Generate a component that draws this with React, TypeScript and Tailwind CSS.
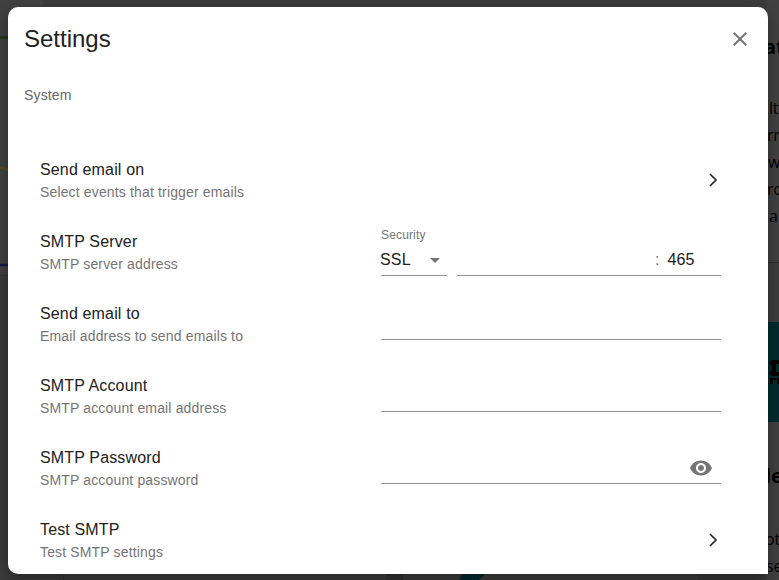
import type { ReactNode } from "react";

const Chevron = () => (
  <svg viewBox="0 0 24 24" className="mr-[-4px] h-6 w-6 fill-none stroke-[#212121] stroke-[1.6]" aria-hidden="true">
    <path d="m9 6 6 6-6 6" />
  </svg>
);

function Row({ title, hint, children }: { title: string; hint: string; children?: ReactNode }) {
  return (
    <div className="flex h-[72px] items-center">
      <div className="w-[341px] shrink-0">
        <div className="text-base leading-6 tracking-[0.15px]">{title}</div>
        <div className="text-sm leading-5 tracking-[0.15px] text-[#757575]">{hint}</div>
      </div>
      <div className="flex min-w-0 flex-1 justify-end">{children}</div>
    </div>
  );
}

function Field({ children }: { children?: ReactNode }) {
  return (
    <div className="flex h-8 w-full items-center justify-end border-b border-[#949494] pr-2">
      {children}
    </div>
  );
}

function Backdrop() {
  return (
    <div className="flex h-full bg-[#3b3b3b] text-black">
      <div className="h-full w-[43px] shrink-0">
        <div className="h-[276px] border-b border-[#333333] bg-[#404040]">
          <svg viewBox="0 0 43 276" className="h-[276px] w-[43px] fill-none stroke-[2.5]">
            <path d="M0 37.5H43" stroke="#20380d" />
            <path d="M0 167.5Q8 169 18 174" stroke="#5a4c14" />
            <path d="M0 265H43" stroke="#14184a" />
          </svg>
        </div>
      </div>
      <div className="flex h-full min-w-0 flex-1 flex-col">
        <div className="h-[574px]" />
        <div className="flex h-[6px]">
          <div className="w-[20px] bg-[#3b3b3b]" />
          <div className="w-[323px] border-l border-[#353535] bg-[#3d3d3d]" />
          <div className="w-[17px] bg-[#343434]" />
          <div className="w-[294px] bg-[#3d3d3d]">
            <svg viewBox="0 0 294 6" className="h-[6px] w-full">
              <path d="M59 0H82L76 6H56Z" fill="#002b30" />
            </svg>
          </div>
          <div className="flex-1 bg-[#393939]" />
        </div>
      </div>
      <div className="w-[13px] shrink-0 overflow-hidden bg-[#404040] pl-[2px] font-['Open_Sans',sans-serif] text-base leading-[27px] tracking-[-0.2px]">
        <div className="h-[263px] border-b border-[#292929] pt-[31px]">
          <div className="ml-[-4px] h-[64px] text-xl font-bold leading-8">at</div>
          <div className="ml-[1px]">lt</div>
          <div className="ml-[-1px]">rr</div>
          <div>w</div>
          <div className="ml-[-1px]">rc</div>
          <div className="ml-[1px]">a</div>
        </div>
        <div className="h-[59px] bg-[#3d3d3d]" />
        <div className="ml-[-2px] h-[100px] bg-[#002b30] pt-[38px]">
          <svg viewBox="0 0 13 24" className="h-6 w-[13px]">
            <path d="M4 2 6 0H13V4H10V12H13V16H6L4 14V11H6V5H4ZM4 18H10V20H7V24H4ZM11 18H13V24H11Z" fill="#000" />
          </svg>
        </div>
        <div className="ml-[-2px] pt-[38px]">
          <div className="ml-[-1px] h-[66px] text-xl font-bold leading-8">le</div>
          <div className="ml-[-1px]">ot</div>
          <div>se</div>
        </div>
      </div>
    </div>
  );
}

export default function App() {
  return (
    <div className="relative h-[580px] w-[779px] overflow-hidden bg-[#3b3b3b] font-['Liberation_Sans',Arial,sans-serif] text-[#212121]">
      <Backdrop />
      <main
        role="dialog"
        aria-label="Settings"
        className="absolute left-2 top-[7px] h-[567px] w-[760px] rounded-[10px] rounded-br-none bg-white px-4 pt-4 shadow-[0_6px_14px_rgba(0,0,0,0.35)]"
      >
        <header className="flex h-8 items-center justify-between">
          <h1 className="text-2xl leading-8">Settings</h1>
          <svg viewBox="0 0 24 24" className="h-6 w-6 fill-[#757575]" aria-label="Close">
            <path d="M19 6.41 17.59 5 12 10.59 6.41 5 5 6.41 10.59 12 5 17.59 6.41 19 12 13.41 17.59 19 19 17.59 13.41 12z" />
          </svg>
        </header>
        <h2 className="mt-[30px] text-sm leading-5 tracking-[0.15px] text-[#666666]">System</h2>
        <section className="mt-[39px] pl-4 pr-[31px]">
          <Row title="Send email on" hint="Select events that trigger emails">
            <Chevron />
          </Row>
          <Row title="SMTP Server" hint="SMTP server address">
            <div className="mb-[2px] flex w-full items-end gap-[10px]">
              <div className="w-[66px]">
                <div className="text-xs leading-4 tracking-[0.15px] text-[#757575]">Security</div>
                <div className="ml-[-1px] mr-0 flex h-[33px] items-center justify-between pl-0 pt-[2px] text-base tracking-[0.15px] shadow-[inset_1px_0_white,inset_0_-1px_#949494]">
                  SSL
                  <svg viewBox="0 0 24 24" className="h-6 w-6 fill-[#757575]" aria-hidden="true">
                    <path d="m7 10 5 5 5-5z" />
                  </svg>
                </div>
              </div>
              <div className="flex h-[33px] flex-1 items-center border-b border-[#949494] pl-[198px] pt-[2px] text-base tracking-[0.15px]">
                <span className="w-[12.5px] text-[#757575]">:</span>
                <span>465</span>
              </div>
            </div>
          </Row>
          <Row title="Send email to" hint="Email address to send emails to">
            <Field />
          </Row>
          <Row title="SMTP Account" hint="SMTP account email address">
            <Field />
          </Row>
          <Row title="SMTP Password" hint="SMTP account password">
            <Field>
              <svg viewBox="0 0 24 24" className="h-6 w-6 fill-[#757575]" aria-label="Show password">
                <path d="M12 4.5C7 4.5 2.73 7.61 1 12c1.73 4.39 6 7.5 11 7.5s9.27-3.11 11-7.5c-1.73-4.39-6-7.5-11-7.5M12 17c-2.76 0-5-2.24-5-5s2.24-5 5-5 5 2.24 5 5-2.24 5-5 5m0-8c-1.66 0-3 1.34-3 3s1.34 3 3 3 3-1.34 3-3-1.34-3-3-3" />
              </svg>
            </Field>
          </Row>
          <Row title="Test SMTP" hint="Test SMTP settings">
            <Chevron />
          </Row>
        </section>
      </main>
    </div>
  );
}
